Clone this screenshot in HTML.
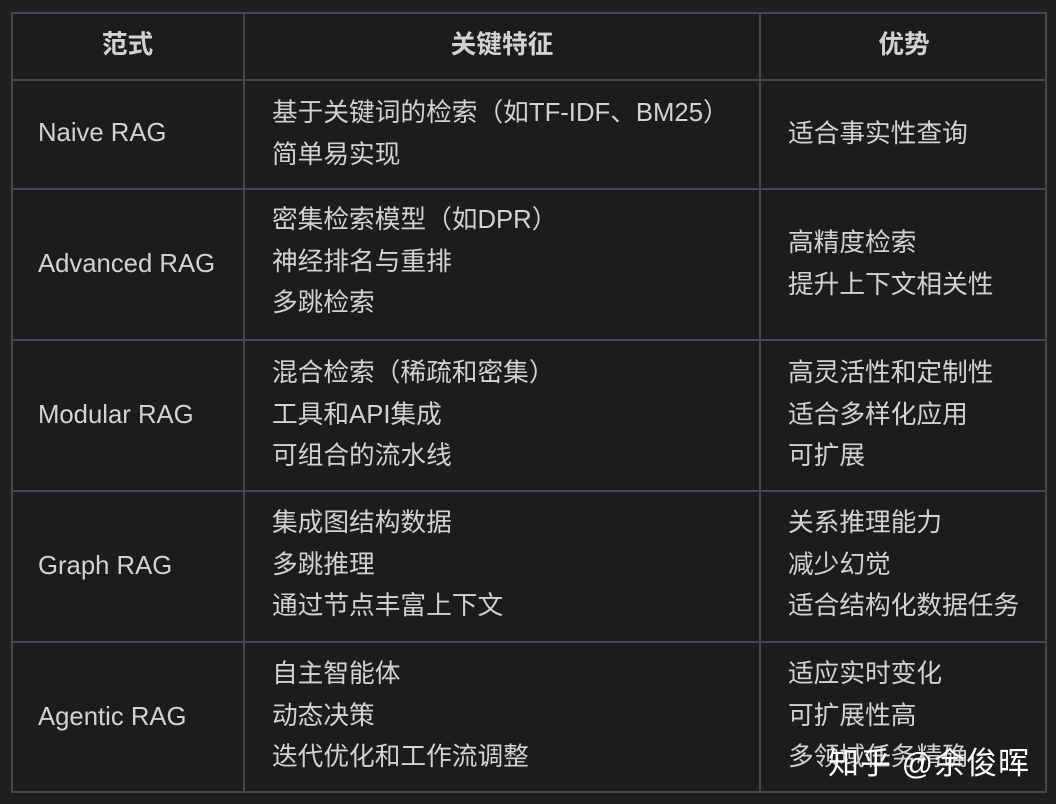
<!DOCTYPE html>
<html><head><meta charset="utf-8">
<style>
html,body{margin:0;padding:0;}
body{width:1056px;height:804px;background:#1f1f22;position:relative;overflow:hidden;
font-family:"Liberation Sans","Noto Sans CJK SC",sans-serif;color:#d2d2d4;}
.t{position:absolute;left:11px;top:12px;width:1036px;height:781px;background:#1c1c1f;border:2px solid #47474b;box-sizing:border-box;}
.h{position:absolute;height:2px;background:#47474b;left:11px;width:1036px;}
.v{position:absolute;width:2px;background:#47474b;top:12px;height:781px;}
.c{position:absolute;font-size:25.7px;line-height:41.5px;white-space:nowrap;}
.hd{font-weight:bold;text-align:center;}
.wm{position:absolute;left:828px;top:738px;font-size:31px;color:#fff;letter-spacing:1px;}
</style></head><body>
<div class="t"></div>
<div class="h" style="top:79px"></div>
<div class="h" style="top:188px"></div>
<div class="h" style="top:339px"></div>
<div class="h" style="top:490px"></div>
<div class="h" style="top:641px"></div>
<div class="v" style="left:243px"></div>
<div class="v" style="left:759px"></div>

<div class="c hd" style="left:11px;width:233px;top:25px">范式</div>
<div class="c hd" style="left:244px;width:516px;top:25px">关键特征</div>
<div class="c hd" style="left:760px;width:288px;top:25px">优势</div>

<div class="c" style="left:38px;top:113px">Naive RAG</div>
<div class="c" style="left:272px;top:93px">基于关键词的检索（如TF-IDF、BM25）<br>简单易实现</div>
<div class="c" style="left:788px;top:114px">适合事实性查询</div>

<div class="c" style="left:38px;top:244px">Advanced RAG</div>
<div class="c" style="left:272px;top:200px">密集检索模型（如DPR）<br>神经排名与重排<br>多跳检索</div>
<div class="c" style="left:788px;top:223px">高精度检索<br>提升上下文相关性</div>

<div class="c" style="left:38px;top:395px">Modular RAG</div>
<div class="c" style="left:272px;top:353px">混合检索（稀疏和密集）<br>工具和API集成<br>可组合的流水线</div>
<div class="c" style="left:788px;top:353px">高灵活性和定制性<br>适合多样化应用<br>可扩展</div>

<div class="c" style="left:38px;top:546px">Graph RAG</div>
<div class="c" style="left:272px;top:503px">集成图结构数据<br>多跳推理<br>通过节点丰富上下文</div>
<div class="c" style="left:788px;top:503px">关系推理能力<br>减少幻觉<br>适合结构化数据任务</div>

<div class="c" style="left:38px;top:697px">Agentic RAG</div>
<div class="c" style="left:272px;top:654px">自主智能体<br>动态决策<br>迭代优化和工作流调整</div>
<div class="c" style="left:788px;top:654px">适应实时变化<br>可扩展性高<br>多领域任务精确</div>

<div class="wm">知乎 @余俊晖</div>
</body></html>
